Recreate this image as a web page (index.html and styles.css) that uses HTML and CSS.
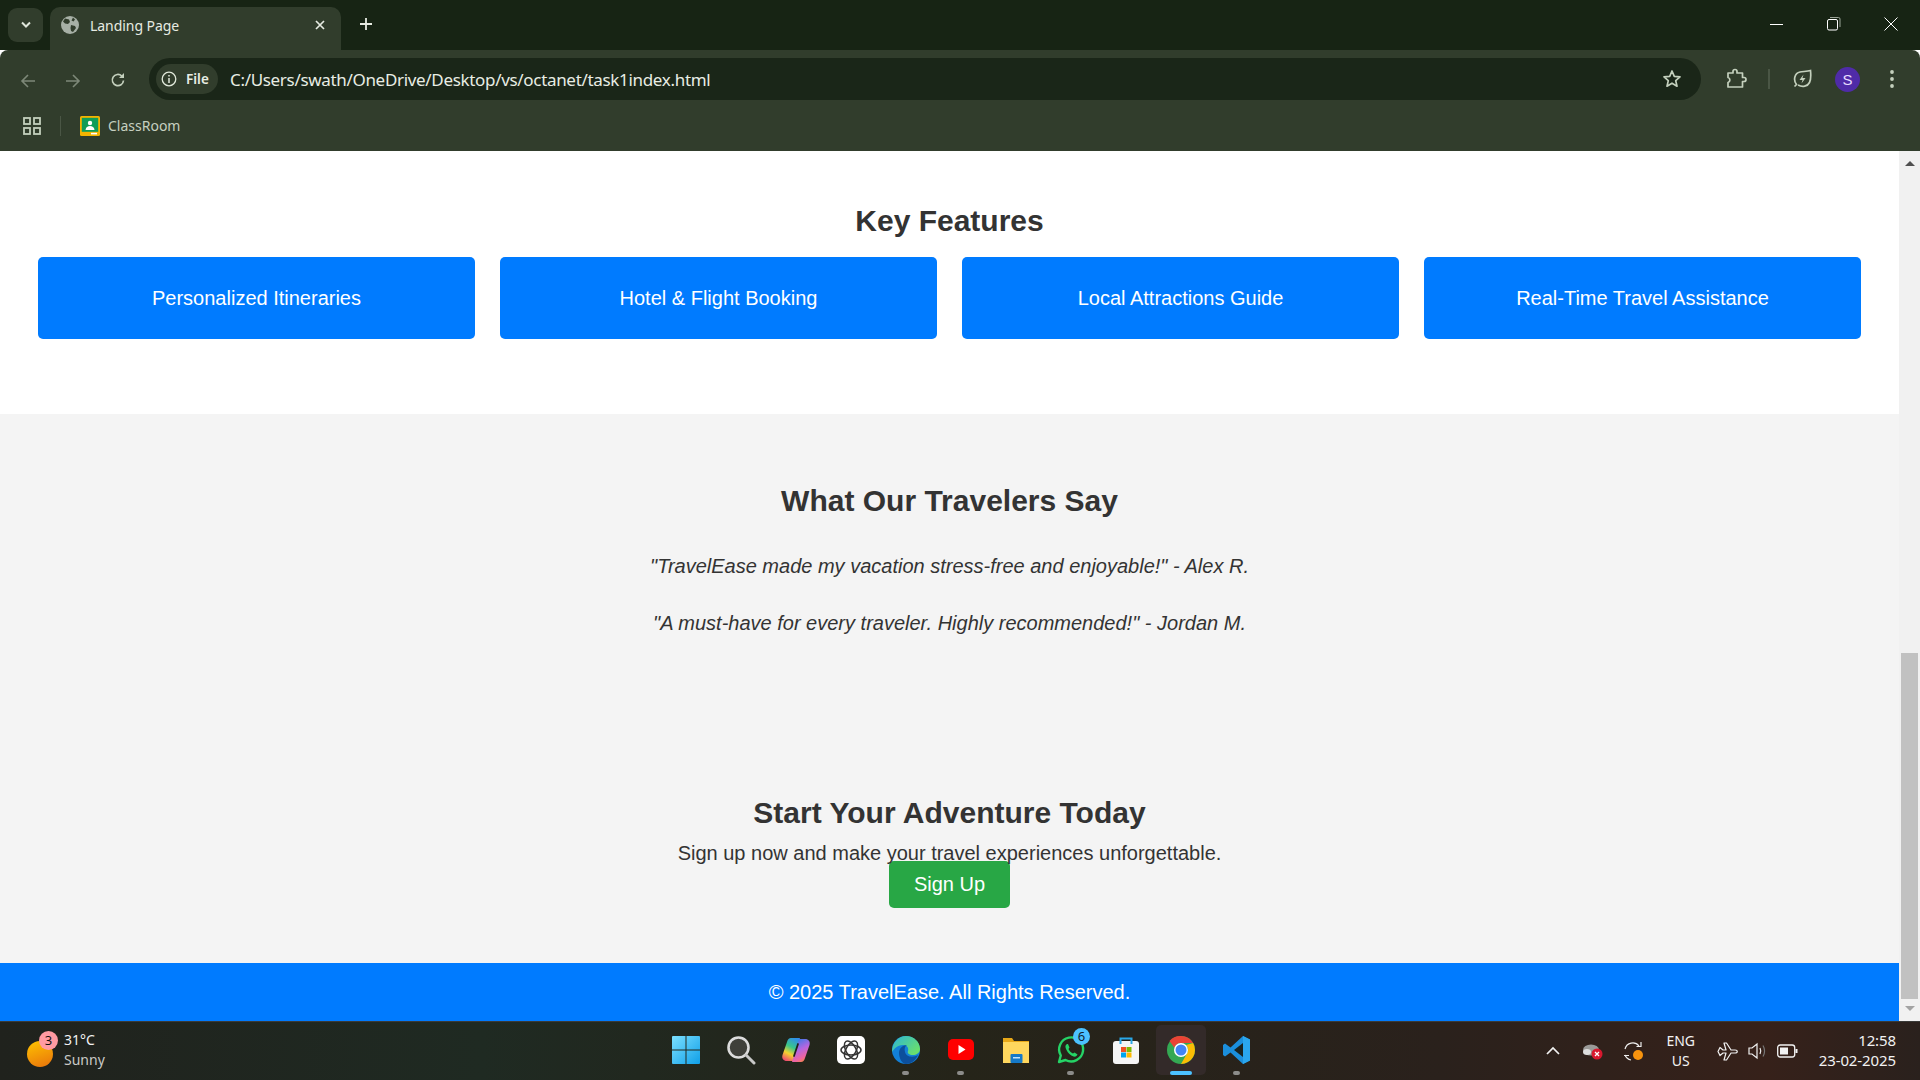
FILE: index.html
```html
<!DOCTYPE html>
<html lang="en">
<head>
<meta charset="utf-8">
<title>Landing Page</title>
<link rel="stylesheet" href="styles.css">
</head>
<body>
<div class="tabstrip">
  <div class="tab-search"><svg width="12" height="8" viewBox="0 0 12 8"><path d="M2 1.5l4 4 4-4" fill="none" stroke="#dfe6da" stroke-width="2"/></svg></div>
  <div class="tab">
    <svg class="tab-favicon" width="18" height="18" viewBox="0 0 18 18"><circle cx="9" cy="9" r="9" fill="#a7b0a6"/><path d="M4 2.5l4 1 1 2.500-2 2-3-.5-2-2zM10 9l4 1 1 2-3 4-2-1-.5-3zM12 1.500l2 2-1.500 2-2-1z" fill="#313d2c"/></svg>
    <span class="tab-title">Landing Page</span>
    <svg class="tab-close" width="12" height="12" viewBox="0 0 12 12"><path d="M2 2l8 8M10 2l-8 8" stroke="#e6ebe2" stroke-width="1.700"/></svg>
  </div>
  <svg class="new-tab" width="14" height="14" viewBox="0 0 14 14"><path d="M7 1v12M1 7h12" stroke="#e6ebe2" stroke-width="1.800"/></svg>
  <div class="win-controls">
    <svg width="14" height="14" viewBox="0 0 14 14"><path d="M0 7.500h13" stroke="#fff"/></svg>
    <svg width="14" height="14" viewBox="0 0 14 14"><rect x=".5" y="2.500" width="10" height="10.500" rx="1.500" fill="none" stroke="#fff"/><path d="M3 .5h8.500a1.500 1.500 0 0 1 1.500 1.500v8" fill="none" stroke="#9aa396"/></svg>
    <svg width="14" height="14" viewBox="0 0 14 14"><path d="M.5.5l13 13M13.500.5l-13 13" stroke="#fff"/></svg>
  </div>
</div>
<div class="toolbar">
  <svg class="nav-icon" width="16" height="16" viewBox="0 0 16 16"><path d="M15 8H2M8 2L2 8l6 6" fill="none" stroke="#7d8878" stroke-width="1.600"/></svg>
  <svg class="nav-icon" width="16" height="16" viewBox="0 0 16 16"><path d="M1 8h13M8 2l6 6-6 6" fill="none" stroke="#7d8878" stroke-width="1.600"/></svg>
  <svg class="nav-icon reload" width="16" height="16" viewBox="0 0 16 16"><path d="M13.500 8.500a5.600 5.600 0 1 1-1.700-4.500" fill="none" stroke="#c4d0bd" stroke-width="1.700"/><path d="M14 1v5H9z" fill="#c4d0bd"/></svg>
  <div class="omnibox">
    <div class="site-chip">
      <svg width="16" height="16" viewBox="0 0 16 16"><circle cx="8" cy="8" r="6.800" fill="none" stroke="#e0e8da" stroke-width="1.300"/><path d="M8 7v5M8 4v1.600" stroke="#e0e8da" stroke-width="1.500"/></svg>
      <span>File</span>
    </div>
    <span class="url">C:/Users/swath/OneDrive/Desktop/vs/octanet/task1index.html</span>
    <svg class="star" width="20" height="20" viewBox="0 0 20 20"><path d="M10 2l2.300 5.300 5.700.5-4.300 3.800 1.300 5.600-5-3-5 3 1.300-5.600L2 7.800l5.700-.5z" fill="none" stroke="#c4d0bd" stroke-width="1.700" stroke-linejoin="round"/></svg>
  </div>
  <div class="tool-icons">
    <svg width="22" height="22" viewBox="0 0 22 22"><path d="M3 5h5V3.500a2 2 0 0 1 4 0V5h5.500v4.500H19a2 2 0 0 1 0 4h-1.500V19H3v-4.500a2.600 2.600 0 0 0 0-5z" fill="none" stroke="#c4d0bd" stroke-width="1.700" stroke-linejoin="round"/></svg>
    <span class="tool-sep"></span>
    <svg width="20" height="20" viewBox="0 0 20 20"><path d="M2.500 17.500l2-2C1 11 2.500 4 8 3c3-.6 7-.5 10.500-1.500.5 5 .5 9-1 12-2 4-7 5-11.500 2.500" fill="none" stroke="#c4d0bd" stroke-width="1.700"/><path d="M11.500 5.500l-4 5.500h3l-1 3.500 4-5.500h-3z" fill="#c4d0bd"/></svg>
    <span class="avatar">S</span>
    <svg width="6" height="20" viewBox="0 0 6 20"><circle cx="3" cy="3" r="1.900" fill="#c4d0bd"/><circle cx="3" cy="10" r="1.900" fill="#c4d0bd"/><circle cx="3" cy="17" r="1.900" fill="#c4d0bd"/></svg>
  </div>
</div>
<div class="bookmarks">
  <svg width="18" height="18" viewBox="0 0 18 18"><g fill="none" stroke="#c4d0bd" stroke-width="1.800"><rect x="1" y="1" width="6" height="6"/><rect x="11" y="1" width="6" height="6"/><rect x="1" y="11" width="6" height="6"/><rect x="11" y="11" width="6" height="6"/></g></svg>
  <span class="bm-sep"></span>
  <svg width="20" height="20" viewBox="0 0 20 20"><rect width="20" height="20" rx="1.500" fill="#f4b400"/><rect x="1.800" y="1.800" width="16.400" height="14" fill="#0f9d58"/><circle cx="10" cy="7" r="2.200" fill="#fff"/><path d="M5.500 14c.5-3 2-4 4.500-4s4 1 4.500 4z" fill="#fff"/><rect x="11" y="16.800" width="6" height="1.600" fill="#fff"/></svg>
  <span class="bm-label">ClassRoom</span>
</div>
<div class="viewport">
  <main class="page">
    <section class="features">
      <h2>Key Features</h2>
      <div class="feature-grid">
        <div class="feature">Personalized Itineraries</div>
        <div class="feature">Hotel &amp; Flight Booking</div>
        <div class="feature">Local Attractions Guide</div>
        <div class="feature">Real-Time Travel Assistance</div>
      </div>
    </section>
    <section class="grey">
      <div class="testimonials">
        <h2>What Our Travelers Say</h2>
        <p>"TravelEase made my vacation stress-free and enjoyable!" - Alex R.</p>
        <p>"A must-have for every traveler. Highly recommended!" - Jordan M.</p>
      </div>
      <div class="cta">
        <h2>Start Your Adventure Today</h2>
        <p>Sign up now and make your travel experiences unforgettable.</p>
        <button class="signup">Sign Up</button>
      </div>
    </section>
    <footer class="footer">© 2025 TravelEase. All Rights Reserved.</footer>
  </main>
  <div class="scrollbar">
    <div class="arrow-up"></div>
    <div class="track"><div class="thumb"></div></div>
    <div class="arrow-down"></div>
  </div>
</div>
<div class="taskbar">
  <div class="weather">
    <div class="sun"><span class="sun-badge">3</span></div>
    <div class="weather-text"><span>31°C</span><span class="muted">Sunny</span></div>
  </div>
  <div class="task-icons">
    <div class="ti"><svg width="30" height="30" viewBox="0 0 30 30"><defs><linearGradient id="w" x1="0" y1="0" x2="1" y2="1"><stop offset="0" stop-color="#7ce0ff"/><stop offset="1" stop-color="#0f9fe8"/></linearGradient></defs><path d="M1 2a1 1 0 0 1 1-1h12.500v13.500H1zM15.500 1H28a1 1 0 0 1 1 1v12.500H15.500zM1 15.500h13.500V29H2a1 1 0 0 1-1-1zM15.500 15.500H29V28a1 1 0 0 1-1 1H15.500z" fill="url(#w)"/></svg></div>
    <div class="ti"><svg width="30" height="30" viewBox="0 0 30 30"><circle cx="12.500" cy="12.500" r="10" fill="#3f403a" stroke="#dcdcdc" stroke-width="2.600"/><path d="M20 20l8 8" stroke="#c8c8c8" stroke-width="3" stroke-linecap="round"/></svg></div>
    <div class="ti"><svg width="30" height="30" viewBox="0 0 30 30"><defs><linearGradient id="c1" x1=".7" y1="0" x2=".3" y2="1"><stop offset="0" stop-color="#2f8fe8"/><stop offset=".4" stop-color="#39c68a"/><stop offset=".7" stop-color="#f5d22e"/><stop offset="1" stop-color="#f0506e"/></linearGradient><linearGradient id="c2" x1=".3" y1="0" x2=".7" y2="1"><stop offset="0" stop-color="#3c78e6"/><stop offset=".45" stop-color="#b566e0"/><stop offset=".8" stop-color="#f064a0"/><stop offset="1" stop-color="#f58a3c"/></linearGradient></defs><path d="M10 3h9l-7 23H6c-3.500 0-5.500-2.500-4.500-6L6 7c.7-2.500 2-4 4-4z" fill="url(#c1)"/><path d="M20 27h-9l7-23h6c3.500 0 5.500 2.500 4.500 6L24 23c-.7 2.500-2 4-4 4z" fill="url(#c2)"/><path d="M17 9l-4 12" stroke="#1f2318" stroke-width="1.800" stroke-linecap="round"/></svg></div>
    <div class="ti"><svg width="30" height="30" viewBox="0 0 30 30"><rect x="1" y="1" width="28" height="28" rx="5" fill="#fff"/><g fill="none" stroke="#333" stroke-width="1.500"><ellipse cx="15" cy="15" rx="10" ry="5"/><ellipse cx="15" cy="15" rx="10" ry="5" transform="rotate(60 15 15)"/><ellipse cx="15" cy="15" rx="10" ry="5" transform="rotate(120 15 15)"/></g></svg></div>
    <div class="ti dot"><svg width="30" height="30" viewBox="0 0 30 30"><defs><linearGradient id="e1" x1="0" y1="0" x2="1" y2=".7"><stop offset="0" stop-color="#2bb5d8"/><stop offset="1" stop-color="#6be06a"/></linearGradient></defs><circle cx="15" cy="15" r="14" fill="#1280d8"/><path d="M15 1c8 0 14 6 14 13 0 4-4 6-7 6-4 0-6-2-5-4 1-3-1-6-5-6-6 0-9 4-11 7C1 8 7 1 15 1z" fill="url(#e1)"/><path d="M8 18c0-5 4-8 8-8-2 1-3 4-2 7 1 5 8 6 13 3-2 5-7 9-12 9-4 0-7-6-7-11z" fill="#0c4f9c"/></svg></div>
    <div class="ti dot"><svg width="30" height="30" viewBox="0 0 30 30"><rect x="2" y="4" width="26" height="21" rx="5" fill="#f00"/><path d="M12.500 10v9l7-4.500z" fill="#fff"/></svg></div>
    <div class="ti"><svg width="30" height="30" viewBox="0 0 30 30"><path d="M2 3h9l2 3h15v22H2z" fill="#e8a818"/><rect x="2" y="7" width="26" height="21" fill="#ffd75e"/><rect x="9.500" y="19" width="12" height="9" rx="1" fill="#1579c8"/><rect x="12" y="22" width="7" height="1.500" fill="#bfe4ff"/></svg></div>
    <div class="ti dot"><svg width="30" height="30" viewBox="0 0 30 30"><path d="M3 27l1.800-6.500A12 12 0 1 1 9.500 25z" fill="none" stroke="#25d366" stroke-width="2.400" stroke-linejoin="round"/><path d="M11 9c-2 1-2 3-.5 6s4 5.500 7 6.500c2 .5 3.500-.5 4-2l-3-2-1.500 1c-2-1-3.500-2.500-4.500-4.500l1-1.500-1.500-3.500z" fill="#25d366"/></svg><span class="wa-badge">6</span></div>
    <div class="ti"><svg width="30" height="30" viewBox="0 0 30 30"><rect x="2" y="6" width="26" height="23" rx="3" fill="#f5f5f5"/><path d="M9.500 9V3.500h11V9" fill="none" stroke="#29a8e8" stroke-width="2"/><rect x="10" y="12" width="5" height="5" fill="#f25022"/><rect x="15.500" y="12" width="5" height="5" fill="#7fba00"/><rect x="10" y="17.500" width="5" height="5" fill="#00a4ef"/><rect x="15.500" y="17.500" width="5" height="5" fill="#ffb900"/></svg></div>
    <div class="ti active"><svg width="30" height="30" viewBox="0 0 30 30"><circle cx="15" cy="15" r="14" fill="#34a853"/><path d="M15 1a14 14 0 0 1 12.100 7H15a7 7 0 0 0-6.600 4.700L3.500 6A14 14 0 0 1 15 1z" fill="#ea4335"/><path d="M27.100 8A14 14 0 0 1 15 29l6-10.500A7 7 0 0 0 20 10z" fill="#fbbc04"/><circle cx="15" cy="15" r="7" fill="#fff"/><circle cx="15" cy="15" r="5.500" fill="#4285f4"/></svg></div>
    <div class="ti dot"><svg width="30" height="30" viewBox="0 0 30 30"><path d="M21 1l7 3.500v21L21 29 8.500 17.500 3 21.500 1 20v-10l2-1.500 5.500 4z" fill="#1b8fdc"/><path d="M21 8v14l-9-7z" fill="#1a2320"/><path d="M21 1l7 3.500v21L21 29z" fill="#2aa6ee"/></svg></div>
  </div>
  <div class="tray">
    <svg width="16" height="10" viewBox="0 0 16 10"><path d="M2 8l6-6 6 6" fill="none" stroke="#f2f2f2" stroke-width="1.700"/></svg>
    <svg class="tray-cloud" width="22" height="18" viewBox="0 0 22 18"><ellipse cx="9" cy="8" rx="8" ry="5.500" fill="#9a9a98"/><ellipse cx="5" cy="10" rx="4" ry="3" fill="#ddd"/><circle cx="15" cy="12" r="5.500" fill="#d9182e"/><path d="M13 10l4 4M17 10l-4 4" stroke="#fff" stroke-width="1.300"/></svg>
    <svg class="tray-sync" width="22" height="22" viewBox="0 0 22 22"><path d="M3 9a8 8 0 0 1 14-3M19 2v4.500h-4.500M2 15.500h5M3 15a8 8 0 0 0 6 5" fill="none" stroke="#eee" stroke-width="1.200"/><circle cx="16" cy="15" r="5" fill="#f7930e"/></svg>
    <div class="lang"><span>ENG</span><span>US</span></div>
    <svg class="tray-plane" width="21" height="19" viewBox="0 0 21 19"><path d="M1 9.500l2-4 3 2.500h3L7 1h2.500l4.500 7h4c3 0 3 3 0 3h-4l-4.500 7H7l2-7H6l-3 2.500z" fill="none" stroke="#f2f2f2" stroke-width="1.200" stroke-linejoin="round"/></svg>
    <svg class="tray-speaker" width="20" height="18" viewBox="0 0 20 18"><path d="M1 6h3l5-4v14l-5-4H1z" fill="none" stroke="#f2f2f2" stroke-width="1.200"/><path d="M12 6c1 2 1 4 0 6" fill="none" stroke="#eee" stroke-width="1.200"/><path d="M15 3.500c2 3.500 2 7.500 0 11" fill="none" stroke="#777" stroke-width="1.200"/></svg>
    <svg class="tray-battery" width="21" height="14" viewBox="0 0 21 14"><rect x=".7" y="1" width="17" height="12" rx="2.500" fill="none" stroke="#f2f2f2" stroke-width="1.300"/><rect x="3" y="3.500" width="8" height="7" fill="#f2f2f2"/><rect x="18.500" y="5" width="2" height="4" fill="#f2f2f2"/></svg>
    <div class="clock"><span>12:58</span><span>23-02-2025</span></div>
  </div>
</div>
</body>
</html>
```
FILE: styles.css
```css
* { box-sizing: border-box; }
html, body { margin: 0; height: 1080px; overflow: hidden; }
body { display: flex; flex-direction: column; width: 1920px; font-family: "Liberation Sans", Arial, sans-serif; }

.tabstrip { height: 50px; background: #172414; display: flex; align-items: center; position: relative; flex: none; }
.tab-search { width: 35px; height: 34px; margin: 8px 0 0 8px; align-self: flex-start; background: #313d2c; border-radius: 9px; display: flex; align-items: center; justify-content: center; }
.tab { width: 291px; height: 43px; margin: 7px 0 0 7px; background: #313d2c; border-radius: 10px 10px 0 0; display: flex; align-items: center; padding: 0 15px 7px 11px; color: #e6ebe2; align-self: flex-start; }
.tab-favicon { flex: none; }
.tab-title { margin-left: 11px; flex: 1; font: 14px "Noto Sans", sans-serif; letter-spacing: -.05px; }
.new-tab { margin: -2px 0 0 18px; }
.win-controls { margin-left: auto; display: flex; gap: 43px; padding: 0 22px 2px 0; align-items: center; }

.toolbar { height: 61px; background: #313d2c; display: flex; align-items: center; padding: 0 20px 0 20px; flex: none; margin-top: 0; border-radius: 8px 8px 0 0; }
.nav-icon { margin-right: 29px; flex: none; }
.nav-icon.reload { margin-right: 23px; margin-top: -2px; }
.omnibox { height: 42px; width: 1552px; margin: -3px 0 0 0; background: #1a2618; border-radius: 21px; display: flex; align-items: center; padding: 0 19px 0 7px; color: #e8ede4; }
.site-chip { height: 30px; width: 62px; background: #313d2c; border-radius: 15px; display: flex; align-items: center; gap: 9px; padding-left: 5px; font: 600 13.500px "Noto Sans", sans-serif; }
.url { margin-left: 12px; padding-top: 1px; flex: 1; font: 17px "Noto Sans", sans-serif; letter-spacing: -.32px; }
.tool-icons { margin: -3px 0 0 24px; display: flex; align-items: center; flex: 1; }
.tool-sep { width: 2px; height: 20px; background: #4a5645; margin: 0 22px 0 21px; }
.avatar { width: 25px; height: 25px; border-radius: 50%; background: #4f2ba8; color: #e7dcff; font: 15px "Liberation Sans", sans-serif; display: flex; align-items: center; justify-content: center; margin: 0 29px 0 23px; }

.bookmarks { height: 40px; background: #313d2c; display: flex; align-items: center; padding: 0 0 11px 23px; flex: none; }
.bm-sep { width: 1px; height: 20px; background: #4a5645; margin: 0 19px 0 19px; }
.bm-label { margin-left: 8px; font: 14px "Noto Sans", sans-serif; color: #c6d0c0; }

.viewport { height: 870px; display: flex; flex: none; }
.page { width: 1899px; display: flex; flex-direction: column; color: #333; background: #fff; text-align: center; }
.page h2 { font-size: 30px; margin: 0; line-height: 37px; }
.features { height: 263px; padding: 51px 38px 0; }
.feature-grid { display: grid; grid-template-columns: repeat(4, 1fr); gap: 25px; margin-top: 18px; }
.feature { height: 82px; background: #007bff; color: #fff; font-size: 20px; border-radius: 5px; display: flex; align-items: center; justify-content: center; }
.grey { height: 549px; background: #f4f4f4; padding-top: 68px; }
.testimonials p { font-size: 20px; font-style: italic; margin: 0; line-height: 23px; }
.page .testimonials h2 { margin-bottom: 36px; }
.testimonials p + p { margin-top: 34px; }
.cta { margin-top: 159px; }
.cta p { font-size: 20px; line-height: 23px; margin: 11px 0 0; }
.signup { display: block; margin: -4px auto 0; width: 121px; height: 47px; border: 0; border-radius: 5px; background: #28a745; color: #fff; font: 20px "Liberation Sans", sans-serif; }
.footer { height: 58px; background: #007bff; color: #fff; font-size: 20px; display: flex; align-items: center; justify-content: center; }

.scrollbar { width: 21px; background: #f1f1f1; display: flex; flex-direction: column; align-items: center; }
.arrow-up { margin-top: 10px; border: 5px solid transparent; border-top: 0; border-bottom: 5px solid #505050; flex: none; }
.track { flex: 1; width: 100%; padding: 0 2px; display: flex; flex-direction: column; justify-content: flex-end; }
.thumb { height: 346px; background: #c1c1c1; margin-bottom: 7px; }
.arrow-down { margin-bottom: 10px; border: 5px solid transparent; border-bottom: 0; border-top: 5px solid #a3a3a3; flex: none; }

.taskbar { height: 59px; flex: none; display: flex; align-items: center; position: relative; color: #f2f2f2; background: linear-gradient(90deg, #20221d 0, #1f2a22 25%, #252419 50%, #2a211c 75%, #36211a 92%, #2a211d 100%); border-top: 1px solid #3a3a38; }
.weather { display: flex; align-items: center; padding-left: 27px; gap: 11px; width: 658px; font: 14px "Noto Sans", sans-serif; }
.sun { width: 26px; height: 26px; border-radius: 50%; background: linear-gradient(160deg, #ffc400, #e8720c); position: relative; margin-top: 5px; }
.sun-badge { position: absolute; left: 12px; top: -10px; width: 19px; height: 19px; border-radius: 50%; background: #ff9aa2; color: #111; font-size: 13px; line-height: 19px; text-align: center; }
.weather-text { display: flex; flex-direction: column; line-height: 20px; padding-bottom: 2px; }
.muted { color: #c9c9c6; }
.task-icons { display: flex; align-items: center; gap: 0; margin-top: -2px; }
.ti { width: 55px; height: 50px; display: flex; align-items: center; justify-content: center; position: relative; flex: none; }
.ti.dot::after { content: ""; position: absolute; left: 24px; bottom: 0; width: 7px; height: 4px; border-radius: 2px; background: #8c8c8a; }
.ti.active { background: #332a29; border-radius: 5px; width: 50px; margin: 0 3px; }
.ti.active::after { content: ""; position: absolute; left: 14px; bottom: 0; width: 22px; height: 4px; border-radius: 2px; background: #4cc2ff; }
.wa-badge { position: absolute; left: 30px; top: 3px; width: 17px; height: 17px; border-radius: 50%; background: #4cc2ff; color: #10202c; font: 13px/17px "Noto Sans", sans-serif; text-align: center; }
.tray { margin-left: auto; display: flex; align-items: center; padding-right: 24px; }
.tray-cloud { margin-left: 21px; }
.tray-sync { margin-left: 18px; }
.lang { display: flex; flex-direction: column; align-items: center; width: 30px; font: 14px/20px "Noto Sans", sans-serif; margin-left: 22px; }
.tray-plane { margin-left: 21px; }
.tray-speaker { margin-left: 10px; }
.tray-battery { margin-left: 9px; }
.clock { display: flex; flex-direction: column; align-items: flex-end; font: 15px/20px "Noto Sans", sans-serif; letter-spacing: -.1px; margin-left: 21px; padding-bottom: 3px; }
```
